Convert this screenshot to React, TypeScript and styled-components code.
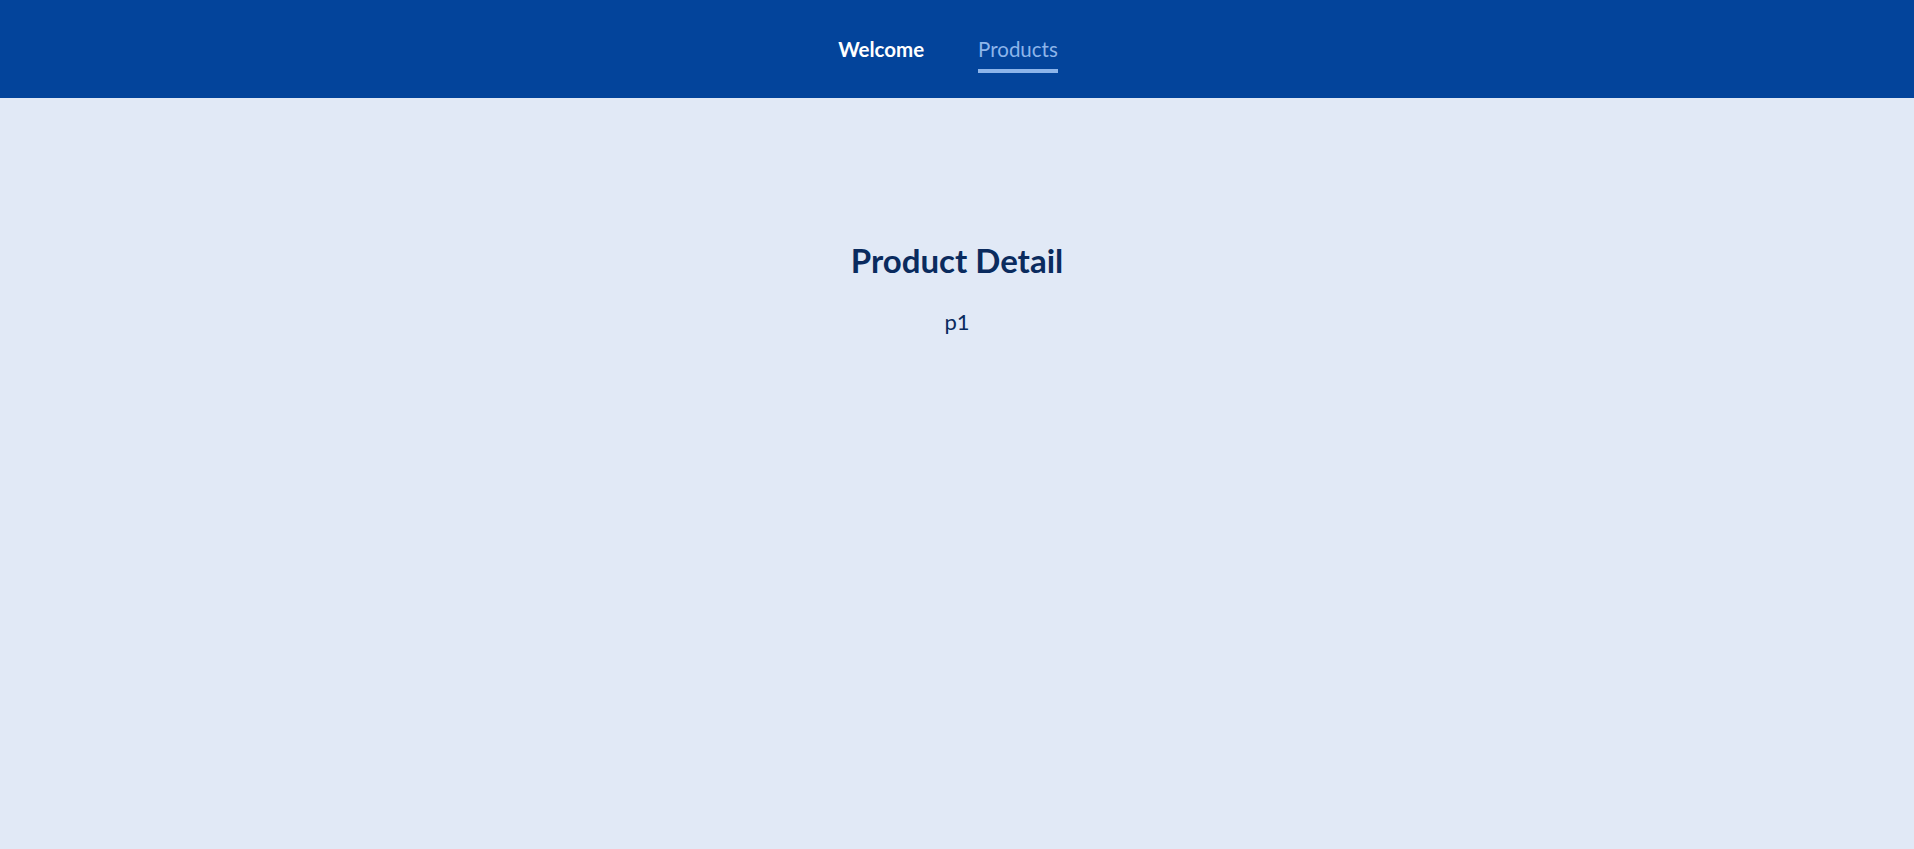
import React from "react";
import styled, { createGlobalStyle } from "styled-components";

const Global = createGlobalStyle`
  html, body { margin: 0; padding: 0; background: #e1e9f6; }
  body { font-family: "Source Sans Pro", Lato, "Noto Sans", sans-serif; }
`;

const Header = styled.header`
  height: 98px;
  background: #03449b;
  display: flex;
  justify-content: center;
  align-items: flex-start;
`;

const Nav = styled.nav`
  display: flex;
  gap: 54px;
  padding-top: 36px;
  padding-right: 18px;
`;

const NavItem = styled.a<{ $active?: boolean }>`
  font-size: 20.5px;
  font-weight: ${(p) => (p.$active ? 400 : 700)};
  color: ${(p) => (p.$active ? "#8db5ea" : "#ffffff")};
  text-decoration: none;
  line-height: 26px;
  padding-bottom: 7px;
  border-bottom: 4px solid ${(p) => (p.$active ? "#8db5ea" : "transparent")};
`;

const Main = styled.main`
  display: flex;
  flex-direction: column;
  align-items: center;
  padding-top: 141px;
  color: #0a2b5e;
`;

const Title = styled.h1`
  margin: 0;
  font-size: 33px;
  font-weight: 700;
  line-height: 42px;
`;

const Text = styled.p`
  margin: 27px 0 0;
  font-size: 22px;
  line-height: 28px;
  color: #0a2b5e;
`;

export default function App() {
  return (
    <>
      <Global />
      <Header>
        <Nav>
          <NavItem href="#">Welcome</NavItem>
          <NavItem href="#" $active>Products</NavItem>
        </Nav>
      </Header>
      <Main>
        <Title>Product Detail</Title>
        <Text>p1</Text>
      </Main>
    </>
  );
}
